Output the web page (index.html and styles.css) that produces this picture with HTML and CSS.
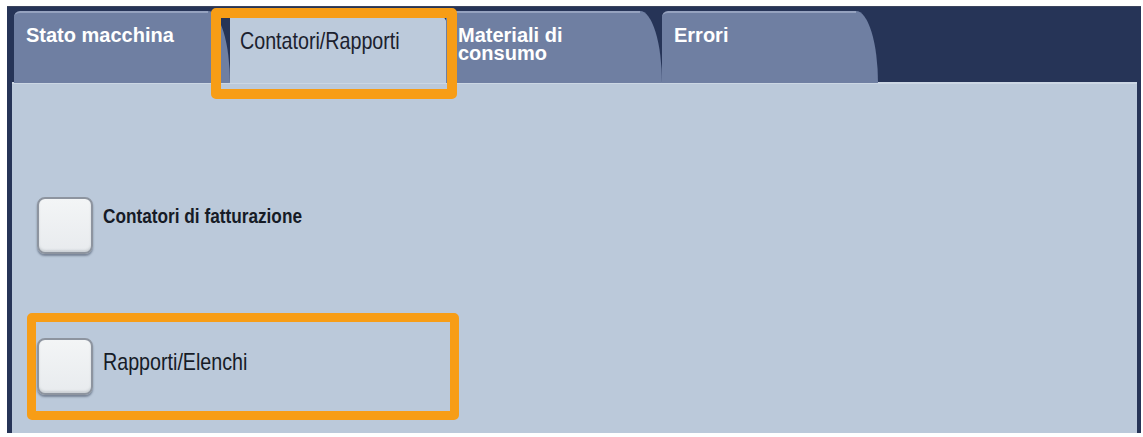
FILE: index.html
```html
<!DOCTYPE html>
<html lang="it">
<head>
<meta charset="utf-8">
<title>Contatori/Rapporti</title>
<link rel="stylesheet" href="styles.css">
</head>
<body>
<div class="screen">
  <div class="tabbar">
    <div class="tab"><div class="tab-body">Stato macchina</div></div>
    <div class="tab active"><div class="tab-body"><span class="narrow">Contatori/Rapporti</span></div></div>
    <div class="tab"><div class="tab-body">Materiali di<br>consumo</div></div>
    <div class="tab"><div class="tab-body">Errori</div></div>
    <div class="tab-highlight"></div>
  </div>
  <div class="content">
    <div class="option">
      <div class="checkbox"></div>
      <div class="label label-bold"><span class="narrow">Contatori di fatturazione</span></div>
    </div>
    <div class="option highlighted">
      <div class="checkbox"></div>
      <div class="label label-regular"><span class="narrow">Rapporti/Elenchi</span></div>
    </div>
  </div>
</div>
</body>
</html>
```

FILE: styles.css
```css
html, body {
  margin: 0;
  padding: 0;
  background: #ffffff;
}

body {
  font-family: "Liberation Sans", Arial, sans-serif;
}

.screen {
  margin: 6px 0 0 7px;
  width: 1134px;
  height: 427px;
  display: flex;
  flex-direction: column;
  background: #263457;
  box-sizing: border-box;
}

.tabbar {
  position: relative;
  height: 76px;
  padding: 4px 0 0 7px;
  box-sizing: border-box;
  display: flex;
  background: #263457;
  border-top: 1px solid #3b445d;
}

.tab {
  width: 216px;
  height: 72px;
  display: flex;
  flex: none;
}

.tab::after {
  content: "";
  width: 22px;
  height: 100%;
  flex: none;
  background: #6f7fa2;
  border-top-right-radius: 100% 100%;
}

.tab-body {
  flex: 1;
  background: #6f7fa2;
  border-top: 2px solid #95a2bf;
  border-top-left-radius: 6px;
  padding: 13px 0 0 12px;
  color: #ffffff;
  font-weight: bold;
  font-size: 20px;
  line-height: 18px;
  white-space: nowrap;
}

.tab.active::after {
  background: #bccadb;
}

.tab.active .tab-body {
  background: #bccadb;
  border-top-color: #bccadb;
  color: #1b212e;
  font-weight: normal;
  font-size: 24px;
  line-height: 24px;
  padding: 16px 0 0 10px;
}

.narrow {
  display: inline-block;
  transform: scaleX(0.82);
  transform-origin: left center;
}

.tab-highlight {
  position: absolute;
  left: 204px;
  top: 1px;
  width: 246px;
  height: 91px;
  border: 10px solid #f79d16;
  border-radius: 5px;
  box-sizing: border-box;
  z-index: 2;
}

.content {
  flex: 1;
  margin: 0 4px 0 5px;
  background: #bbc9da;
  border-top: 2px solid #ccd7e4;
  padding: 88px 0 0 15px;
  display: flex;
  flex-direction: column;
  gap: 34px;
}

.option {
  width: 432px;
  height: 107px;
  box-sizing: border-box;
  border: 9px solid transparent;
  border-radius: 5px;
  padding: 16px 0 0 1px;
  display: flex;
  align-items: flex-start;
}

.option.highlighted {
  border-color: #f79d16;
}

.checkbox {
  width: 56px;
  height: 57px;
  flex: none;
  box-sizing: border-box;
  border: 2px solid #8d949f;
  border-radius: 8px;
  background: linear-gradient(#f3f5f6, #e8ebee);
  box-shadow: 0 2px 2px rgba(40, 50, 70, 0.45), inset 0 -2px 2px rgba(120, 130, 140, 0.25);
}

.label {
  margin-left: 10px;
  color: #161b26;
  line-height: 1;
  white-space: nowrap;
}

.label-bold {
  font-weight: bold;
  font-size: 21px;
  margin-top: 8px;
}

.label-regular {
  font-size: 24px;
  margin-top: 12px;
}
```
